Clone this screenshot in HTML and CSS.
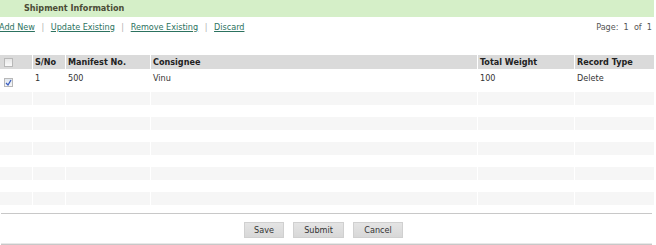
FILE: index.html
```html
<!DOCTYPE html>
<html lang="en">
<head>
    <meta charset="UTF-8">
    <title>Shipment Information</title>
    <link rel="stylesheet" href="styles.css">
</head>
<body>
    <div class="page">
        <div class="panel-title">Shipment Information</div>
        <div class="toolbar">
            <div class="actions">
                <a href="#">Add New</a>
                <span class="sep">|</span>
                <a href="#">Update Existing</a>
                <span class="sep">|</span>
                <a href="#">Remove Existing</a>
                <span class="sep">|</span>
                <a href="#">Discard</a>
            </div>
            <div class="pager">Page:&nbsp; 1 &nbsp;of&nbsp; 1</div>
        </div>
        <table class="grid">
            <thead>
                <tr>
                    <th class="col-check"><span class="check"></span></th>
                    <th class="col-sno">S/No</th>
                    <th class="col-manifest">Manifest No.</th>
                    <th class="col-consignee">Consignee</th>
                    <th class="col-weight">Total Weight</th>
                    <th class="col-type">Record Type</th>
                </tr>
            </thead>
            <tbody>
                <tr class="data-row">
                    <td><span class="check checked"><svg width="7" height="7" viewBox="0 0 7 7"><path d="M1 4 L3 6 L6 1" fill="none" stroke="#3a5ec0" stroke-width="1.3"/></svg></span></td>
                    <td>1</td>
                    <td>500</td>
                    <td>Vinu</td>
                    <td>100</td>
                    <td>Delete</td>
                </tr>
                <tr class="empty odd"><td></td><td></td><td></td><td></td><td></td><td></td></tr>
                <tr class="empty"><td></td><td></td><td></td><td></td><td></td><td></td></tr>
                <tr class="empty odd"><td></td><td></td><td></td><td></td><td></td><td></td></tr>
                <tr class="empty"><td></td><td></td><td></td><td></td><td></td><td></td></tr>
                <tr class="empty odd"><td></td><td></td><td></td><td></td><td></td><td></td></tr>
                <tr class="empty"><td></td><td></td><td></td><td></td><td></td><td></td></tr>
                <tr class="empty odd"><td></td><td></td><td></td><td></td><td></td><td></td></tr>
                <tr class="empty"><td></td><td></td><td></td><td></td><td></td><td></td></tr>
                <tr class="empty odd"><td></td><td></td><td></td><td></td><td></td><td></td></tr>
            </tbody>
        </table>
        <div class="button-bar">
            <button class="btn">Save</button>
            <button class="btn">Submit</button>
            <button class="btn">Cancel</button>
        </div>
    </div>
</body>
</html>
```

FILE: styles.css
```css
body {
    margin: 0;
    padding: 0;
    background: #fff;
    font-family: "DejaVu Sans Condensed", "DejaVu Sans", Verdana, sans-serif;
    font-stretch: condensed;
    font-size: 9px;
    color: #333;
}

.page {
    width: 654px;
}

.panel-title {
    height: 17px;
    line-height: 17px;
    background-color: #d5efc8;
    padding-left: 24px;
    font-weight: bold;
    color: #4b4b35;
}

.toolbar {
    display: flex;
    justify-content: space-between;
    align-items: center;
    height: 15px;
    margin-top: 2px;
}

.actions {
    margin-left: -1px;
}

.actions a {
    color: #2c7260;
    text-decoration: underline;
}

.actions .sep {
    color: #b0b0b0;
    margin: 0 4px;
}

.pager {
    color: #555;
    padding-right: 2px;
}

.grid {
    width: 654px;
    border-collapse: collapse;
    margin-top: 21px;
}

.grid th,
.grid td {
    border-right: 1px solid #fff;
    padding: 0 0 0 2px;
    text-align: left;
    vertical-align: middle;
}

.grid th:last-child,
.grid td:last-child {
    border-right: none;
}

.grid thead tr {
    height: 14px;
    background-color: #dadada;
}

.grid th {
    font-weight: bold;
    color: #222;
}

.col-check { width: 30px; }
.col-sno { width: 30px; }
.col-manifest { width: 82px; }
.col-consignee { width: 324px; }
.col-weight { width: 94px; }

.grid .data-row {
    height: 23px;
}

.grid .data-row td {
    vertical-align: top;
    padding-top: 4px;
}

.grid .data-row td:first-child {
    padding-top: 3px;
}

.grid .empty {
    height: 12.5px;
}

.grid .odd {
    background-color: #f6f6f6;
}

.check {
    display: inline-block;
    width: 7px;
    height: 7px;
    margin-left: 2px;
    border: 1px solid #b8b8b8;
    background: linear-gradient(#e6e6e6, #fafafa);
    vertical-align: middle;
}

.check.checked {
    margin-top: 6px;
    background: linear-gradient(#e0e6ee, #f8f8f8);
}

.check svg {
    display: block;
}

.button-bar {
    margin-top: 8px;
    margin-left: 1px;
    width: 651px;
    border-top: 1px solid #c8c8c8;
    box-shadow: 0 -1px 0 #e8e8e8 inset;
    border-bottom: 1px solid #c8c8c8;
    padding: 8px 6px 6px 0;
    box-sizing: border-box;
    display: flex;
    justify-content: center;
    gap: 9px;
}

.btn {
    font-family: "DejaVu Sans Condensed", "DejaVu Sans", Verdana, sans-serif;
    font-stretch: condensed;
    font-size: 9px;
    color: #333;
    height: 16px;
    padding: 0 8px;
    border: 1px solid #d0d0d0;
    background: linear-gradient(#e4e4e4, #d8d8d8);
}

.btn:nth-child(1) { min-width: 40px; }
.btn:nth-child(2) { min-width: 51px; }
.btn:nth-child(3) { min-width: 50px; }
```
